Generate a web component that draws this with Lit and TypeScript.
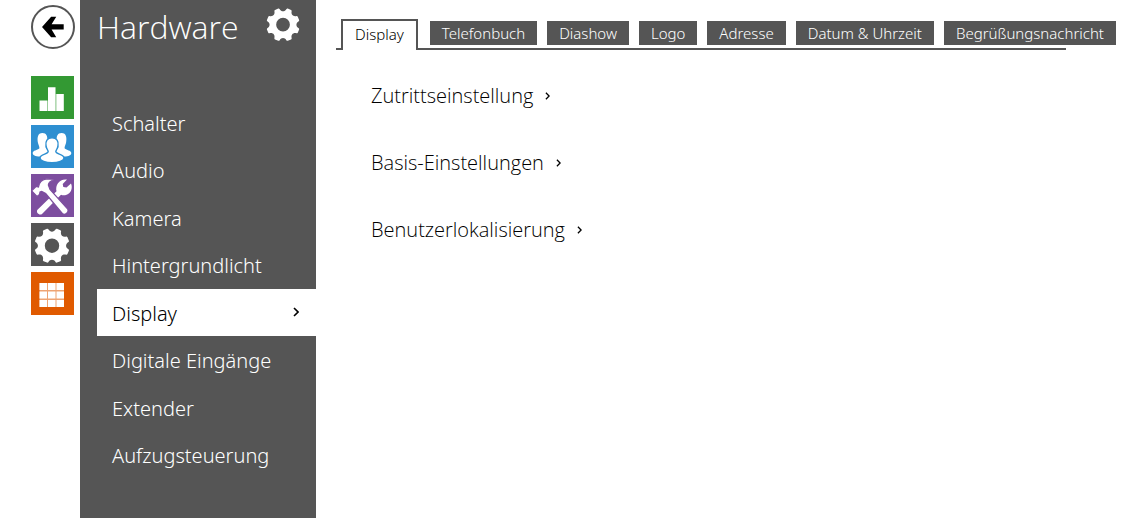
import { LitElement, html, svg, css } from "lit";
import { customElement, property, state } from "lit/decorators.js";
import { classMap } from "lit/directives/class-map.js";

function gearPath(cx: number, cy: number, r: number, hole: number): string {
  const at = (radius: number, deg: number) => {
    const a = (deg * Math.PI) / 180;
    return `${(cx + radius * Math.cos(a)).toFixed(2)} ${(cy + radius * Math.sin(a)).toFixed(2)}`;
  };
  let d = "";
  for (let k = 0; k < 8; k++) {
    const a = 22.5 + k * 45;
    d += `${k ? "L" : "M"}${at(r * 0.96, a - 10)}Q${at(r, a - 9)} ${at(r, a - 6)}L${at(r, a + 6)}Q${at(r, a + 9)} ${at(r * 0.96, a + 10)}`;
    d += `C${at(r * 0.76, a + 15)} ${at(r * 0.76, a + 30)} ${at(r * 0.96, a + 35)}`;
  }
  d += `ZM${cx - hole} ${cy}a${hole} ${hole} 0 1 0 ${hole * 2} 0a${hole} ${hole} 0 1 0 ${-hole * 2} 0Z`;
  return d;
}

const icons: Record<string, unknown> = {
  back: svg`<path fill="#000" d="M9.700 21.500 19.500 10.400H25L20 18.500H33V24.300H20L25 32.600H19.500Z"/>`,
  status: svg`<path fill="#fff" d="M8.500 24.500H16V35H8.500ZM17 11.300h7.500V35H17ZM25.300 18h7.500v17h-7.500Z"/><path fill="#fff" opacity=".5" d="M16 24.500h1V35h-1ZM24.500 18h.8v17h-.8Z"/>`,
  users: svg`<g fill="#fff">
    <path d="M11.500 8C15.500 8 16.700 11.500 16.300 15.500C16 19 15 20 14.500 21.500C14.500 24 16 24.500 18 25.500V31.500H9C4 31.500 1.700 30 1.700 28C1.700 25.500 6.500 25 8.300 23.500C8.800 22 7.500 20 7 18C6 13 6.500 8 11.500 8Z"/>
    <path d="M30.500 8C26.500 8 25.300 11.500 25.700 15.500C26 19 27 20 27.500 21.500C27.500 24 26 24.500 24 25.500V31.500H33C38 31.500 40.300 30 40.300 28C40.300 25.500 35.500 25 33.700 23.500C33.200 22 34.500 20 35 18C36 13 35.500 8 30.500 8Z"/>
    <path stroke="#2e8fd1" stroke-width="1.400" d="M21 12.800C26 12.800 27.600 16.500 27 20.500C26.600 23.500 25.200 25 24.800 26.500C24.700 29.300 33 29 33 33C33 36 27 37.800 21 37.800S9 36 9 33C9 29 17.300 29.300 17.200 26.500C16.800 25 15.400 23.500 15 20.500C14.400 16.500 16 12.800 21 12.800Z"/>
  </g>`,
  tools: svg`
    <path fill="#fff" d="M36 5.500 31.700 10 32.300 13 35.500 13.500 40 9.500C42 14 40 19.500 35 21C33 21.500 31.300 21.200 30 20.700L11 40C8.500 42 4.500 38.500 6.500 35.800L25.500 17.300C24 11 28.500 4.500 36 5.500Z"/>
    <path fill="#fff" stroke="#7d4e9f" stroke-width="1.200" d="M.7 16.800 5 12.500 7.500 13C8 9 11 5.300 16 4.800L24 5.500C20 6.500 17.500 8.500 17.300 11L19 15.500 36.500 34.800C38.500 38 34 42 31.300 39.500L14.700 19.500 10.700 17.500 9 18 8.500 20.500 6 22.500Z"/>`,
  gear: svg`<path fill="#fff" fill-rule="evenodd" d=${gearPath(21, 22.7, 17.6, 7.2)} />`,
  grid: svg`<path fill="#fff" opacity=".45" d="M8.500 11h24.500v24h-24.500Z"/><path fill="#fff" d="M8.500 11H16v7H8.500ZM17 11h7.500v7H17ZM25.500 11H33v7h-7.500ZM8.500 19.500H16v7H8.500ZM17 19.500h7.500v7H17ZM25.500 19.500H33v7h-7.500ZM8.500 28H16v7H8.500ZM17 28h7.500v7H17ZM25.500 28H33v7h-7.500Z"/>`,
};

const icon = (name: string) =>
  html`<svg class="icon" viewBox="0 0 43 43" aria-hidden="true">${icons[name]}</svg>`;

const chevron = html`<svg class="chevron" viewBox="0 0 6 10" aria-hidden="true">
  <path d="M1 1l4 4-4 4" fill="none" stroke="currentColor" stroke-width="1.600" />
</svg>`;

const base = css`
  :host {
    display: block;
    font-family: "Open Sans", "Noto Sans", sans-serif;
    font-weight: 300;
  }
  * {
    box-sizing: border-box;
  }
  a {
    color: inherit;
    text-decoration: none;
  }
  button {
    font: inherit;
    cursor: pointer;
  }
  .icon {
    display: block;
    width: 100%;
    height: 100%;
  }
`;

@customElement("icon-rail")
class IconRail extends LitElement {
  static styles = [
    base,
    css`
      .rail {
        display: flex;
        flex-direction: column;
        align-items: flex-start;
        gap: 6px;
        padding: 5px 5px 0 31px;
      }
      .back {
        width: 44px;
        height: 44px;
        margin-bottom: 21px;
        padding: 0;
        border: 2px solid #555;
        border-radius: 50%;
        background: #fff;
      }
      .tile {
        width: 43px;
        height: 43px;
      }
      .status { background: #339933; }
      .users { background: #2e8fd1; }
      .tools { background: #7d4e9f; }
      .gear { background: #555; }
      .grid { background: #e05a00; }
    `,
  ];
  private links = [
    ["status", "Status"],
    ["users", "Verzeichnis"],
    ["tools", "Dienste"],
    ["gear", "Hardware"],
    ["grid", "System"],
  ];
  render() {
    return html`<nav class="rail">
      <button class="back" type="button" aria-label="Zurück">${icon("back")}</button>
      ${this.links.map(
        ([name, label]) =>
          html`<a class="tile ${name}" href="#${name}" aria-label=${label}>${icon(name)}</a>`
      )}
    </nav>`;
  }
}

@customElement("side-menu")
class SideMenu extends LitElement {
  static styles = [
    base,
    css`
      :host {
        background: #555;
        color: #fff;
      }
      .head {
        display: flex;
        align-items: flex-start;
        justify-content: space-between;
        padding: 3px 12px 0 17px;
      }
      h1 {
        margin: 0;
        font-size: 32px;
        line-height: 48px;
        font-weight: 300;
      }
      .mark {
        width: 41px;
        height: 41px;
      }
      .menu {
        display: grid;
        grid-auto-rows: 1fr;
        gap: 1px;
        min-height: 379px;
        margin-top: 48px;
        padding-left: 17px;
        font-family: "Noto Sans", "Open Sans", sans-serif;
      }
      .item {
        display: flex;
        align-items: center;
        justify-content: space-between;
        padding: 3px 17px 0 15px;
        font-size: 20px;
        line-height: 28px;
      }
      .active {
        background: #fff;
        color: #000;
      }
      .chevron {
        width: 6px;
        height: 10px;
        margin-bottom: 3px;
      }
    `,
  ];
  @property() selected = "Display";
  private items = [
    "Schalter",
    "Audio",
    "Kamera",
    "Hintergrundlicht",
    "Display",
    "Digitale Eingänge",
    "Extender",
    "Aufzugsteuerung",
  ];
  render() {
    return html`<div class="head">
        <h1>Hardware</h1>
        <div class="mark">${icon("gear")}</div>
      </div>
      <nav class="menu">
        ${this.items.map((t) => {
          const active = t === this.selected;
          return html`<a class=${classMap({ item: true, active })} href="#">${t}${active ? chevron : ""}</a>`;
        })}
      </nav>`;
  }
}

@customElement("app-root")
class AppRoot extends LitElement {
  static styles = [
    base,
    css`
      .page {
        display: grid;
        grid-template-columns: 80px 236px minmax(0, 1fr);
        min-height: 100vh;
        overflow: hidden;
        background: #fff;
        color: #000;
      }
      main {
        padding: 19px 60px 0 20px;
      }
      .tabs {
        display: flex;
        align-items: flex-start;
        gap: 10px;
        padding-left: 5px;
        border-bottom: 2px solid #555;
      }
      .tab {
        flex: none;
        height: 24px;
        margin-top: 2px;
        padding: 0 12px;
        border: 0;
        background: #555;
        color: #fff;
        font-family: "Noto Sans", "Open Sans", sans-serif;
        font-size: 15px;
        line-height: 24px;
        white-space: nowrap;
      }
      .tab.current {
        height: 31px;
        margin: 0 2px -2px 0;
        padding: 0 12px 4px;
        border: 2px solid #555;
        border-bottom: 0;
        background: #fff;
        color: #000;
      }
      .sections {
        display: flex;
        flex-direction: column;
        align-items: flex-start;
        gap: 39px;
        padding: 32px 0 0 35px;
      }
      h2 {
        margin: 0;
        font-size: 20px;
        line-height: 28px;
        font-weight: 300;
      }
      .toggle {
        display: flex;
        align-items: center;
        gap: 12px;
        padding: 0;
        border: 0;
        background: none;
        color: inherit;
        line-height: 28px;
      }
      .chevron {
        width: 5px;
        height: 8px;
      }
    `,
  ];
  @state() private tab = "Display";
  private tabs = ["Display", "Telefonbuch", "Diashow", "Logo", "Adresse", "Datum & Uhrzeit", "Begrüßungsnachricht"];
  private sections = ["Zutrittseinstellung", "Basis-Einstellungen", "Benutzerlokalisierung"];
  render() {
    return html`<div class="page">
      <icon-rail></icon-rail>
      <side-menu></side-menu>
      <main>
        <div class="tabs" role="tablist">
          ${this.tabs.map((t) => {
            const current = t === this.tab;
            return html`<button
              class=${classMap({ tab: true, current })}
              type="button"
              role="tab"
              aria-selected=${current}
              @click=${() => (this.tab = t)}
            >${t}</button>`;
          })}
        </div>
        <div class="sections">
          ${this.sections.map(
            (s) => html`<h2><button class="toggle" type="button" aria-expanded="false">${s}${chevron}</button></h2>`
          )}
        </div>
      </main>
    </div>`;
  }
}
